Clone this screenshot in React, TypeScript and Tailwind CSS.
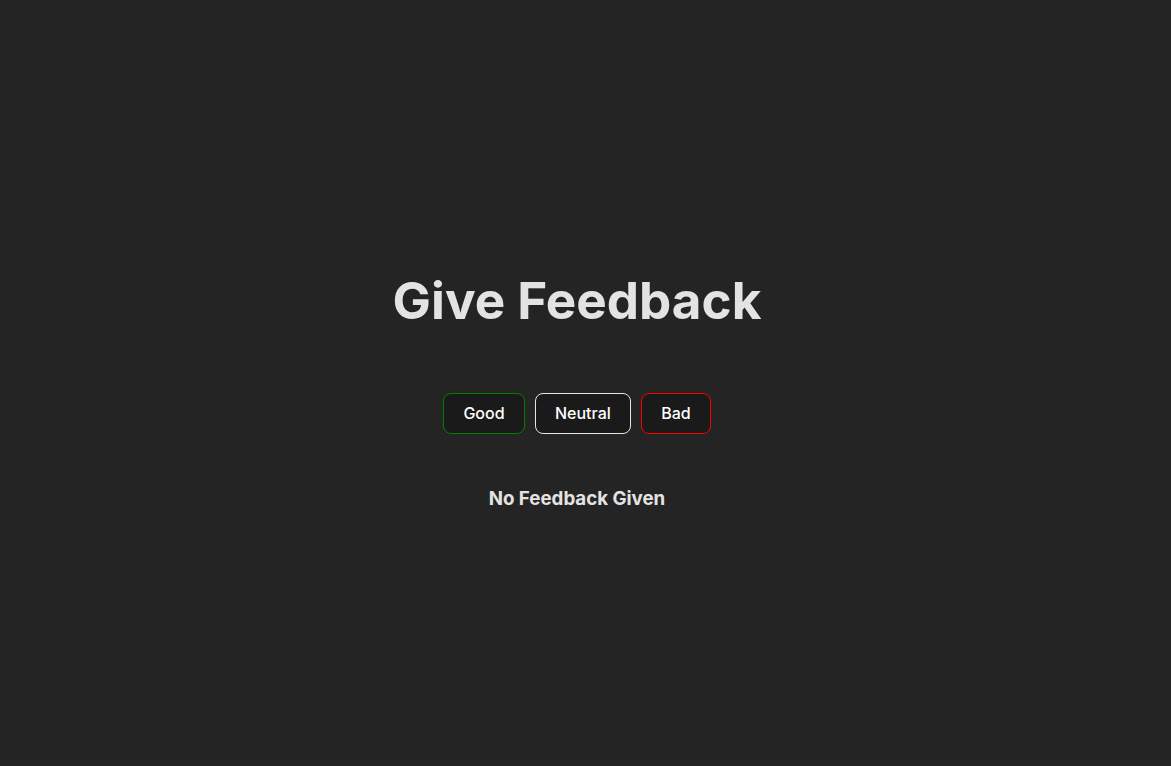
import React, { useState } from "react";

const App: React.FC = () => {
  const [good, setGood] = useState(0);
  const [neutral, setNeutral] = useState(0);
  const [bad, setBad] = useState(0);
  const total = good + neutral + bad;

  const btn =
    "rounded-lg border bg-[#1a1a1a] px-[19.2px] py-[9.6px] text-base leading-[19.4px] font-medium text-white cursor-pointer";

  return (
    <div
      className="min-h-screen w-full bg-[#242424] text-[#e3e3e3] pr-[17px]"
      style={{ fontFamily: "Inter, 'Noto Sans', sans-serif" }}
    >
      <div className="flex flex-col items-center pt-[272px]">
        <h1 className="text-[51.2px] font-bold leading-[1.1]">Give Feedback</h1>

        <div className="mt-[65px] flex gap-[10px]">
          <button className={`${btn} border-[#008000]`} onClick={() => setGood(good + 1)}>
            Good
          </button>
          <button className={`${btn} border-[#e6e6e6]`} onClick={() => setNeutral(neutral + 1)}>
            Neutral
          </button>
          <button className={`${btn} border-[#ff0000]`} onClick={() => setBad(bad + 1)}>
            Bad
          </button>
        </div>

        {total === 0 ? (
          <h3 className="mt-[51px] text-[18.72px] font-bold leading-[28px]">No Feedback Given</h3>
        ) : (
          <div className="mt-[51px] flex flex-col items-center gap-1 text-base">
            <p>Good: {good}</p>
            <p>Neutral: {neutral}</p>
            <p>Bad: {bad}</p>
            <p>Total: {total}</p>
          </div>
        )}
      </div>
    </div>
  );
};

export default App;
